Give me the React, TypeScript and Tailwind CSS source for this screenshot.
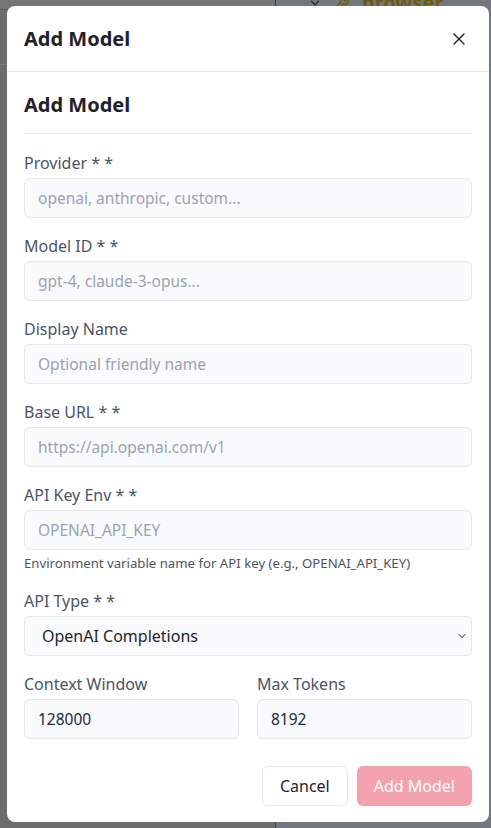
import { X, ChevronDown, Wrench } from 'lucide-react'

type Field = {
  label: string
  placeholder?: string
  value?: string
  hint?: string
}

const fields: Field[] = [
  { label: 'Provider * *', placeholder: 'openai, anthropic, custom...' },
  { label: 'Model ID * *', placeholder: 'gpt-4, claude-3-opus...' },
  { label: 'Display Name', placeholder: 'Optional friendly name' },
  { label: 'Base URL * *', placeholder: 'https://api.openai.com/v1' },
  {
    label: 'API Key Env * *',
    placeholder: 'OPENAI_API_KEY',
    hint: 'Environment variable name for API key (e.g., OPENAI_API_KEY)',
  },
]

const inputClass =
  'h-10 w-full rounded-md border border-[#e5e7eb] bg-[#f9fafb] px-[13px] text-[15.5px] text-[#1f2937] placeholder:text-[#9ca3af] outline-none'

function FormField({ label, placeholder, value, hint }: Field) {
  return (
    <div className="mb-4">
      <label className="mb-[3px] block text-[16px] leading-6 text-[#4b5563]">{label}</label>
      <input className={inputClass} placeholder={placeholder} defaultValue={value} />
      {hint && <p className="mt-[3px] text-[13.2px] leading-5 text-[#4b5563]">{hint}</p>}
    </div>
  )
}

export default function App() {
  return (
    <div
      className="relative h-[828px] w-full overflow-hidden bg-[#6c6c6c]"
      style={{ fontFamily: '"Noto Sans", "Open Sans", sans-serif' }}
    >
      {/* page underneath the overlay */}
      <div className="flex h-full">
        <div className="w-[276px] border-r border-[#3f3f3f]">
          <div className="h-[10px] border-b border-[#5e5e5e] bg-[#767676]" />
          <div className="mt-[54px] border-b border-[#7a7a7a]" />
        </div>
        <div className="flex-1 bg-[#737780]">
          <div className="-mt-[12px] flex items-center gap-3 pl-[32px]">
            <ChevronDown size={14} className="text-[#2a2a2a]" />
            <Wrench size={16} className="text-[#6e5a14]" />
            <span className="text-[20px] font-bold text-[#6e5a14]">browser</span>
          </div>
        </div>
      </div>

      {/* dialog */}
      <div className="absolute inset-0 pl-[7px] pt-[6px]">
        <div className="flex h-[816px] w-[482px] flex-col rounded-lg bg-white">
          <div className="flex h-[66px] items-center justify-between border-b border-[#e5e7eb] px-[17px]">
            <h1 className="text-[20px] font-bold text-[#1f2328]">Add Model</h1>
            <button className="mr-[3px] text-[#1f2328]">
              <X size={20} strokeWidth={1.6} />
            </button>
          </div>

          <div className="px-[17px] pt-[19px]">
            <h2 className="border-b border-[#e5e7eb] pb-[14px] text-[20px] font-bold leading-7 text-[#1f2328]">
              Add Model
            </h2>

            <div className="pt-[17px]">
              {fields.map((f) => (
                <FormField key={f.label} {...f} />
              ))}

              <div className="mb-4">
                <label className="mb-[3px] block text-[16px] leading-6 text-[#4b5563]">API Type * *</label>
                <div className="relative">
                  <select className="h-10 w-full appearance-none rounded-md border border-[#e5e7eb] bg-[#f9fafb] pl-[17px] text-[16px] text-[#1f2328] outline-none">
                    <option>OpenAI Completions</option>
                  </select>
                  <ChevronDown
                    size={12}
                    strokeWidth={2}
                    className="pointer-events-none absolute right-[4px] top-[14px] text-[#1f2328]"
                  />
                </div>
              </div>

              <div className="grid grid-cols-2 gap-[18px]">
                <div>
                  <label className="mb-[3px] block text-[16px] leading-6 text-[#4b5563]">Context Window</label>
                  <input className={inputClass} defaultValue="128000" />
                </div>
                <div>
                  <label className="mb-[3px] block text-[16px] leading-6 text-[#4b5563]">Max Tokens</label>
                  <input className={inputClass} defaultValue="8192" />
                </div>
              </div>

              <div className="mt-[27px] flex justify-end gap-[9px]">
                <button className="h-10 rounded-md border border-[#e5e7eb] bg-white px-[17px] text-[16px] text-[#1f2328]">
                  Cancel
                </button>
                <button className="h-10 rounded-md bg-[#f4a2ae] px-[17px] text-[16px] text-white">
                  Add Model
                </button>
              </div>
            </div>
          </div>
        </div>
      </div>
    </div>
  )
}
